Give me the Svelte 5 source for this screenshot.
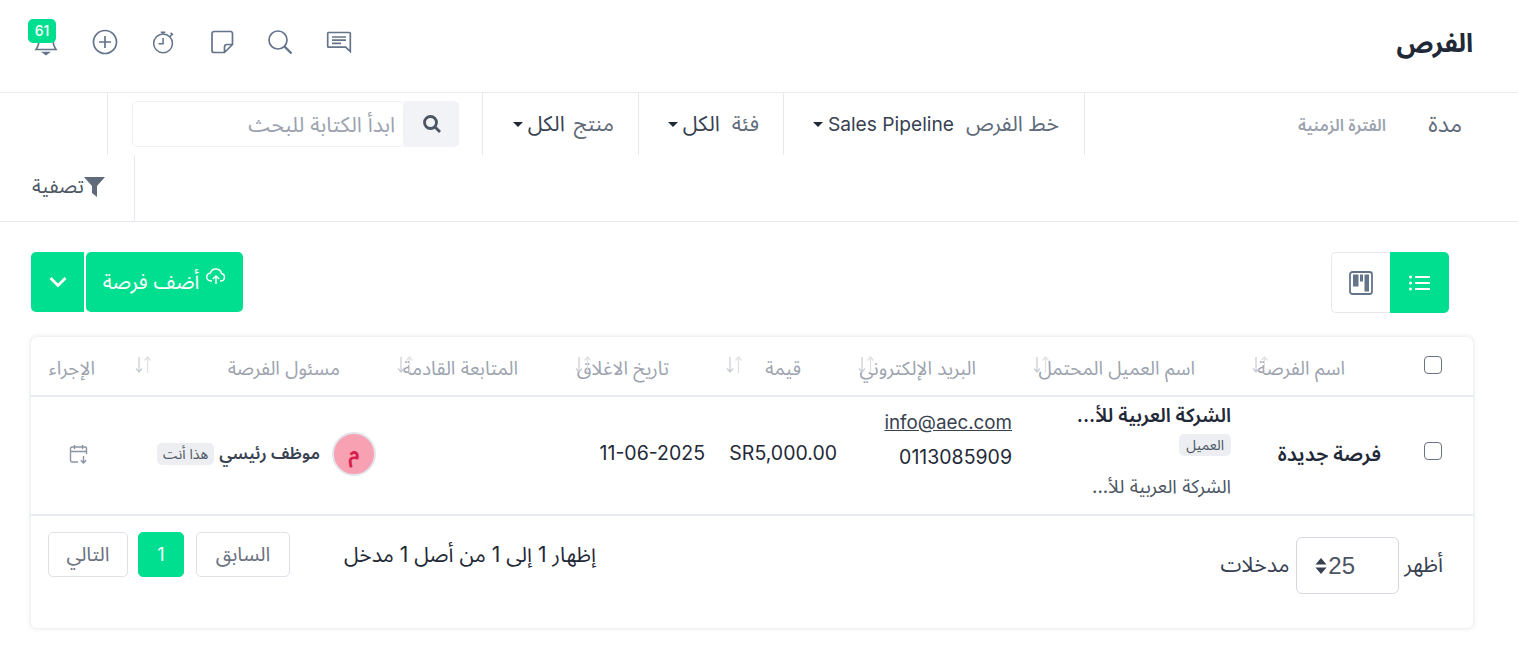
<script>
  const columns = [
    { key: 'name', label: 'اسم الفرصة' },
    { key: 'customer', label: 'اسم العميل المحتمل' },
    { key: 'email', label: 'البريد الإلكتروني' },
    { key: 'value', label: 'قيمة' },
    { key: 'close', label: 'تاريخ الاغلاق' },
    { key: 'next', label: 'المتابعة القادمة' },
    { key: 'owner', label: 'مسئول الفرصة' }
  ];
</script>

<div class="page" dir="rtl">
  <header class="topbar">
    <h1>الفرص</h1>
    <div class="top-icons">
      <button class="icon-btn" aria-label="messages">
        <svg width="28" height="28" viewBox="0 0 28 28"><path d="M3.500 4.500h21a.8.8 0 0 1 .8.8v18.200l-4.600-4.300H3.500a.8.8 0 0 1-.8-.8V5.300a.8.8 0 0 1 .8-.8zM7 9h14M7 12.200h14M7 15.400h9"/></svg>
      </button>
      <button class="icon-btn" aria-label="search">
        <svg width="28" height="28" viewBox="0 0 28 28"><circle cx="12" cy="12" r="9"/><path d="M18.500 18.500l7 7" stroke-width="2.400"/></svg>
      </button>
      <button class="icon-btn" aria-label="notes">
        <svg width="24" height="24" viewBox="0 0 24 24"><path d="M14.500 22.500H4a2 2 0 0 1-2-2V3.500a2 2 0 0 1 2-2h17a2 2 0 0 1 1.500 2V14.500zM22.500 14.500H17a2.500 2.500 0 0 0-2.500 2.500v5.500"/></svg>
      </button>
      <button class="icon-btn" aria-label="timer">
        <svg width="25" height="25" viewBox="0 0 28 28"><circle cx="13.500" cy="15" r="10.500"/><path d="M13.500 9v6.500H8.500M11 2.500h5M13.500 2.500v2M22 3l2.500 2.500M21 7.500l2.300-2.300"/></svg>
      </button>
      <button class="icon-btn" aria-label="add">
        <svg width="28" height="28" viewBox="0 0 28 28"><circle cx="14" cy="14" r="11.500"/><path d="M14 8v12M8 14h12"/></svg>
      </button>
      <button class="icon-btn bell" aria-label="notifications">
        <svg width="28" height="28" viewBox="0 0 28 28"><path d="M14 5a7 7 0 0 0-7 7c0 6-2 8-3 9.500h20c-1-1.500-3-3.500-3-9.500a7 7 0 0 0-7-7zM11.500 24.500h5L14 26.500z"/></svg>
        <span class="count">61</span>
      </button>
    </div>
  </header>

  <section class="filters">
    <div class="filter period">
      <span class="key">مدة</span>
      <span class="strong">الفترة الزمنية</span>
    </div>
    <div class="filter pipeline">
      <span class="key">خط الفرص</span>
      <span class="val">Sales Pipeline <i class="caret"></i></span>
    </div>
    <div class="filter category">
      <span class="key">فئة</span>
      <span class="val ar">الكل <i class="caret"></i></span>
    </div>
    <div class="filter product">
      <span class="key">منتج</span>
      <span class="val ar">الكل <i class="caret"></i></span>
    </div>
    <div class="filter search-cell">
      <div class="search-box">
        <span class="search-btn">
          <svg width="20" height="20" viewBox="0 0 20 20"><circle cx="8.500" cy="8.500" r="6"/><path d="M13 13l5 5"/></svg>
        </span>
        <input type="text" placeholder="ابدأ الكتابة للبحث" />
      </div>
    </div>
    <div class="filter apply">
      <svg width="21" height="20" viewBox="0 0 21 20"><path d="M0 0h21l-8 9v11l-5-4V9z"/></svg>
      <span>تصفية</span>
    </div>
  </section>

  <section class="toolbar">
    <div class="view-toggle">
      <button class="view active" aria-label="list">
        <svg width="24" height="24" viewBox="0 0 24 24"><path d="M7 6h15M7 12h15M7 18h15"/><circle cx="2.500" cy="6" r="1.500"/><circle cx="2.500" cy="12" r="1.500"/><circle cx="2.500" cy="18" r="1.500"/></svg>
      </button>
      <button class="view" aria-label="board">
        <svg width="24" height="24" viewBox="0 0 24 24"><rect x="1" y="1" width="22" height="22" rx="2.500"/><path class="fill" d="M4 3.500h5.500v12H4zM11 3.500h3v7h-3zM15.500 3.500H20v17h-4.500z"/></svg>
      </button>
    </div>
    <div class="add-group">
      <button class="add">
        <svg width="20" height="20" viewBox="0 0 20 20"><path d="M6 14H5a4 4 0 0 1-.6-8A5.800 5.800 0 0 1 15.500 6.500 3.800 3.800 0 0 1 15 14h-1M10 17V9M6.800 12L10 9l3.200 3"/></svg>
        <span>أضف فرصة</span>
      </button>
      <button class="more" aria-label="more">
        <svg width="20" height="12" viewBox="0 0 20 12"><path d="M2.500 2L10 9.500 17.500 2"/></svg>
      </button>
    </div>
  </section>

  <section class="card">
    <table>
      <colgroup>
        <col style="width: 80px" />
        <col style="width: 150px" />
        <col style="width: 219px" />
        <col style="width: 175px" />
        <col style="width: 132px" />
        <col style="width: 151px" />
        <col style="width: 178px" />
        <col style="width: 262px" />
        <col style="width: 95px" />
      </colgroup>
      <thead>
        <tr>
          <th class="check"><span class="box"></span></th>
          {#each columns as col (col.key)}
            <th>
              {col.label}
              <svg class="sort" width="17" height="20" viewBox="0 0 17 20">
                <path class="down" d="M4 2v15M1 13.500L4 17l3-3.500"/>
                <path class="up" d="M12.500 18V2M9.500 5.500L12.500 2l3 3.500"/>
              </svg>
            </th>
          {/each}
          <th class="action-head">الإجراء</th>
        </tr>
      </thead>
      <tbody>
        <tr>
          <td class="check"><span class="box"></span></td>
          <td class="strong-cell opp">فرصة جديدة</td>
          <td class="customer">
            <div class="strong-cell">الشركة العربية للأ...</div>
            <div class="tag-line"><span class="tag">العميل</span></div>
            <div class="muted">الشركة العربية للأ...</div>
          </td>
          <td class="contact">
            <div class="mail">info@aec.com</div>
            <div class="phone">0113085909</div>
          </td>
          <td class="num">SR5,000.00</td>
          <td class="num">11-06-2025</td>
          <td></td>
          <td>
            <div class="owner">
              <span class="avatar">م</span>
              <span class="owner-name">موظف رئيسي</span>
              <span class="tag you">هذا أنت</span>
            </div>
          </td>
          <td class="action">
            <svg width="20" height="20" viewBox="0 0 20 20"><path d="M9 18H3a1.500 1.500 0 0 1-1.500-1.500V4.500A1.500 1.500 0 0 1 3 3h13a1.500 1.500 0 0 1 1.500 1.500V10M1.500 7.500h16M5.500 1v4M13.500 1v4M14.500 12v7M11.800 16.300l2.700 2.700 2.700-2.700"/></svg>
          </td>
        </tr>
      </tbody>
    </table>
    <div class="table-foot">
      <div class="length">
        <span class="show">أظهر</span>
        <span class="select">
          <span>25</span>
          <svg width="12" height="16" viewBox="0 0 12 16"><path d="M6 0l5.500 6.500H.5zM6 16L.5 9.500h11z"/></svg>
        </span>
        <span class="entries">مدخلات</span>
      </div>
      <div class="paging">
        <span class="info">إظهار 1 إلى 1 من أصل 1 مدخل</span>
        <div class="pages">
          <button class="page-btn prev">السابق</button>
          <button class="page-btn current">1</button>
          <button class="page-btn next">التالي</button>
        </div>
      </div>
    </div>
  </section>
</div>

<style>
  :global(body) {
    margin: 0;
    background: #fff;
  }

  .page {
    font-family: Inter, "Noto Sans Arabic", "DejaVu Sans", sans-serif;
    font-size: 19.200px;
    color: #1f2937;
    height: 663px;
    overflow: hidden;
  }

  button {
    font: inherit;
    border: 0;
    background: none;
    padding: 0;
  }

  .topbar {
    height: 92px;
    display: flex;
    align-items: center;
    justify-content: space-between;
    padding: 0 45px 0 17px;
    border-bottom: 1px solid #e9ecf1;
  }

  h1 {
    margin: 0;
    font-size: 26px;
    font-weight: 700;
    color: #1f2937;
    position: relative;
    top: -3px;
  }

  .top-icons {
    display: flex;
    position: relative;
    top: -4px;
  }

  .icon-btn {
    width: 58.500px;
    height: 30px;
    display: flex;
    align-items: center;
    justify-content: center;
    position: relative;
  }

  .icon-btn svg {
    fill: none;
    stroke: #64748b;
    stroke-width: 1.700;
  }

  .count {
    position: absolute;
    top: -8px;
    left: 11px;
    width: 28px;
    height: 24px;
    border-radius: 5px;
    background: #00de90;
    color: #fff;
    font-size: 14px;
    font-weight: 500;
    line-height: 24px;
    text-align: center;
  }

  .filters {
    display: flex;
    flex-wrap: wrap;
    border-bottom: 1px solid #e5e8ee;
  }

  .filter {
    height: 62px;
    box-sizing: border-box;
    display: flex;
    align-items: center;
    border-left: 1px solid #e5e8ee;
    color: #4b5563;
  }

  .period {
    width: 434px;
    padding-right: 56px;
    gap: 36px;
  }

  .period .key {
    min-width: 40px;
    font-size: 23px;
  }

  .pipeline {
    width: 301px;
    padding-right: 25px;
    gap: 12px;
  }

  .category {
    width: 145px;
    padding-right: 24px;
    gap: 12px;
  }

  .product {
    width: 156px;
    padding-right: 24px;
    gap: 9px;
  }

  .key {
    color: #5f6b7a;
    font-size: 21.300px;
  }

  .strong {
    color: #9ca3af;
    font-size: 16.500px;
    font-weight: 600;
    padding-top: 2px;
  }

  .val {
    color: #374151;
    display: inline-flex;
    align-items: center;
    gap: 5px;
  }

  .val.ar {
    font-size: 21.300px;
  }

  .caret {
    width: 0;
    height: 0;
    border: 5px solid transparent;
    border-top-color: #1f2937;
    border-bottom: 0;
  }

  .search-cell {
    width: 375px;
    padding-right: 23px;
  }

  .search-box {
    display: flex;
    width: 327px;
    height: 46px;
  }

  .search-box input {
    width: 272px;
    box-sizing: border-box;
    border: 1px solid #f0f1f5;
    border-radius: 5px;
    padding: 0 8px;
    font: inherit;
    font-size: 21.300px;
    color: #374151;
    outline: none;
    background: #fff;
  }

  .search-box input::placeholder {
    color: #9ca3af;
  }

  .search-btn {
    flex: 1;
    display: flex;
    align-items: center;
    justify-content: center;
    background: #f1f3f7;
    border-radius: 0 5px 5px 0;
  }

  .search-btn svg {
    fill: none;
    stroke: #4b5563;
    stroke-width: 2.800;
  }

  .apply {
    width: 135px;
    height: 66px;
    margin-right: auto;
    padding-right: 29px;
    padding-bottom: 2px;
    color: #4b5563;
    font-size: 20px;
    border-left: 0;
    border-right: 1px solid #e5e8ee;
  }

  .apply svg {
    fill: #5f6b7a;
  }

  .toolbar {
    display: flex;
    align-items: flex-start;
    justify-content: space-between;
    padding: 30px 69px 24px 31px;
  }

  .view-toggle {
    display: flex;
    height: 61px;
  }

  .view {
    width: 59px;
    height: 61px;
    box-sizing: border-box;
    display: flex;
    align-items: center;
    justify-content: center;
    border: 1px solid #e5e8ee;
    border-right: 0;
    border-radius: 5px 0 0 5px;
  }

  .view svg {
    fill: none;
    stroke: #64748b;
    stroke-width: 1.800;
  }

  .view .fill {
    fill: #64748b;
    stroke: none;
  }

  .view.active {
    background: #00de90;
    border: 0;
    border-radius: 0 5px 5px 0;
  }

  .view.active svg {
    stroke: #fff;
  }

  .view.active circle {
    fill: #fff;
    stroke: none;
  }

  .add-group {
    display: flex;
    gap: 2px;
  }

  .add,
  .more {
    height: 60px;
    background: #00de90;
    color: #fff;
    display: flex;
    align-items: center;
    justify-content: center;
    font-size: 20.500px;
  }

  .add {
    width: 157px;
    gap: 7px;
    border-radius: 5px;
  }

  .add svg {
    fill: none;
    stroke: #fff;
    stroke-width: 1.500;
    position: relative;
    top: -5px;
  }

  .more {
    width: 53px;
    border-top-left-radius: 5px;
    border-bottom-left-radius: 5px;
  }

  .more svg {
    fill: none;
    stroke: #fff;
    stroke-width: 2.800;
  }

  .card {
    margin: 0 45px 0 31px;
    height: 291px;
    box-sizing: border-box;
    border-radius: 6px;
    box-shadow: 0 0 5px rgba(60, 72, 100, 0.18);
  }

  table {
    width: 100%;
    table-layout: fixed;
    border-collapse: collapse;
  }

  th {
    height: 59px;
    box-sizing: border-box;
    padding: 6px 48px 0 0;
    text-align: right;
    font-size: 19px;
    font-weight: 400;
    color: #9ca3af;
    white-space: nowrap;
    position: relative;
    border-bottom: 2px solid #e8ebf1;
  }

  th.action-head {
    padding-right: 31px;
  }

  th.check,
  td.check {
    padding: 0;
    text-align: center;
  }

  .sort {
    position: absolute;
    left: 9px;
    top: 18px;
    fill: none;
    stroke-width: 1.200;
  }

  .sort .down {
    stroke: #c8ccd4;
  }

  .sort .up {
    stroke: #dde0e5;
  }

  .box {
    display: inline-block;
    width: 18px;
    height: 18px;
    box-sizing: border-box;
    border: 1.500px solid #6b7280;
    border-radius: 4px;
    vertical-align: middle;
    position: relative;
    top: -2px;
  }

  td .box {
    top: -6px;
  }

  td {
    height: 119px;
    padding: 0 12px;
    border-bottom: 2px solid #e8ebf1;
    vertical-align: middle;
    box-sizing: border-box;
    white-space: nowrap;
  }

  .strong-cell {
    font-size: 19.400px;
    font-weight: 600;
    line-height: 22px;
    color: #1f2937;
  }

  .opp {
    font-size: 20.200px;
    padding-bottom: 4px;
  }

  .customer {
    vertical-align: top;
    padding-top: 7px;
  }

  .tag-line {
    display: flex;
    margin: 8px 0 20px;
    height: 22px;
  }

  .tag {
    display: inline-block;
    background: #eceef1;
    border-radius: 5px;
    color: #4b5563;
    font-size: 14px;
    font-weight: 400;
    line-height: 22px;
    padding: 0 7px;
  }

  .muted {
    color: #4b5563;
    font-size: 18.800px;
    line-height: 22px;
  }

  .contact {
    vertical-align: top;
    padding-top: 14px;
    text-align: right;
  }

  .mail {
    color: #374151;
    font-size: 18.800px;
    text-decoration: underline;
    line-height: 24px;
    margin-bottom: 10px;
  }

  .phone {
    font-size: 19.500px;
    line-height: 24px;
    color: #1f2937;
  }

  .num {
    font-size: 19.500px;
    color: #1f2937;
    padding-bottom: 6px;
  }

  .owner {
    display: flex;
    align-items: center;
    padding-bottom: 4px;
  }

  .avatar {
    width: 44px;
    height: 44px;
    box-sizing: border-box;
    border: 2px solid #e3e5ec;
    border-radius: 50%;
    background: #f7a1b2;
    color: #d81e4b;
    font-size: 20px;
    font-weight: 700;
    display: flex;
    align-items: center;
    justify-content: center;
    margin-left: 12px;
  }

  .owner-name {
    font-size: 17px;
    font-weight: 600;
    color: #374151;
    margin-left: 5px;
  }

  .you {
    padding: 0 6px;
  }

  .action {
    padding: 0;
    padding-bottom: 4px;
  }

  .action svg {
    fill: none;
    stroke: #8a94a3;
    stroke-width: 1.400;
    display: block;
    margin-right: 37px;
  }

  .table-foot {
    display: flex;
    justify-content: space-between;
    padding: 16px 30px 0 17px;
  }

  .length {
    display: flex;
    align-items: center;
    gap: 5px;
    height: 57px;
    margin-top: 5px;
    color: #374151;
  }

  .show {
    font-size: 21.300px;
  }

  .entries {
    font-size: 21.300px;
    margin-right: 2px;
  }

  .select {
    width: 103px;
    height: 57px;
    box-sizing: border-box;
    border: 1px solid #d5d8de;
    border-radius: 6px;
    display: flex;
    align-items: center;
    justify-content: flex-end;
    padding-left: 18px;
    gap: 1px;
    font-family: "Liberation Sans", sans-serif;
    font-size: 24px;
    color: #4b5563;
  }

  .select svg {
    fill: #374151;
  }

  .paging {
    display: flex;
    align-items: center;
    gap: 54px;
    height: 45px;
  }

  .info {
    color: #1f2937;
    font-size: 21px;
  }

  .pages {
    display: flex;
    gap: 10px;
    height: 45px;
  }

  .page-btn {
    height: 45px;
    box-sizing: border-box;
    border: 1px solid #dfe1e8;
    border-radius: 5px;
    color: #6b7280;
    font-size: 20px;
  }

  .prev {
    width: 94px;
    margin-left: 2px;
  }

  .current {
    width: 46px;
    background: #00de90;
    border-color: #00de90;
    color: #fff;
    font-size: 18px;
  }

  .next {
    width: 80px;
  }
</style>
